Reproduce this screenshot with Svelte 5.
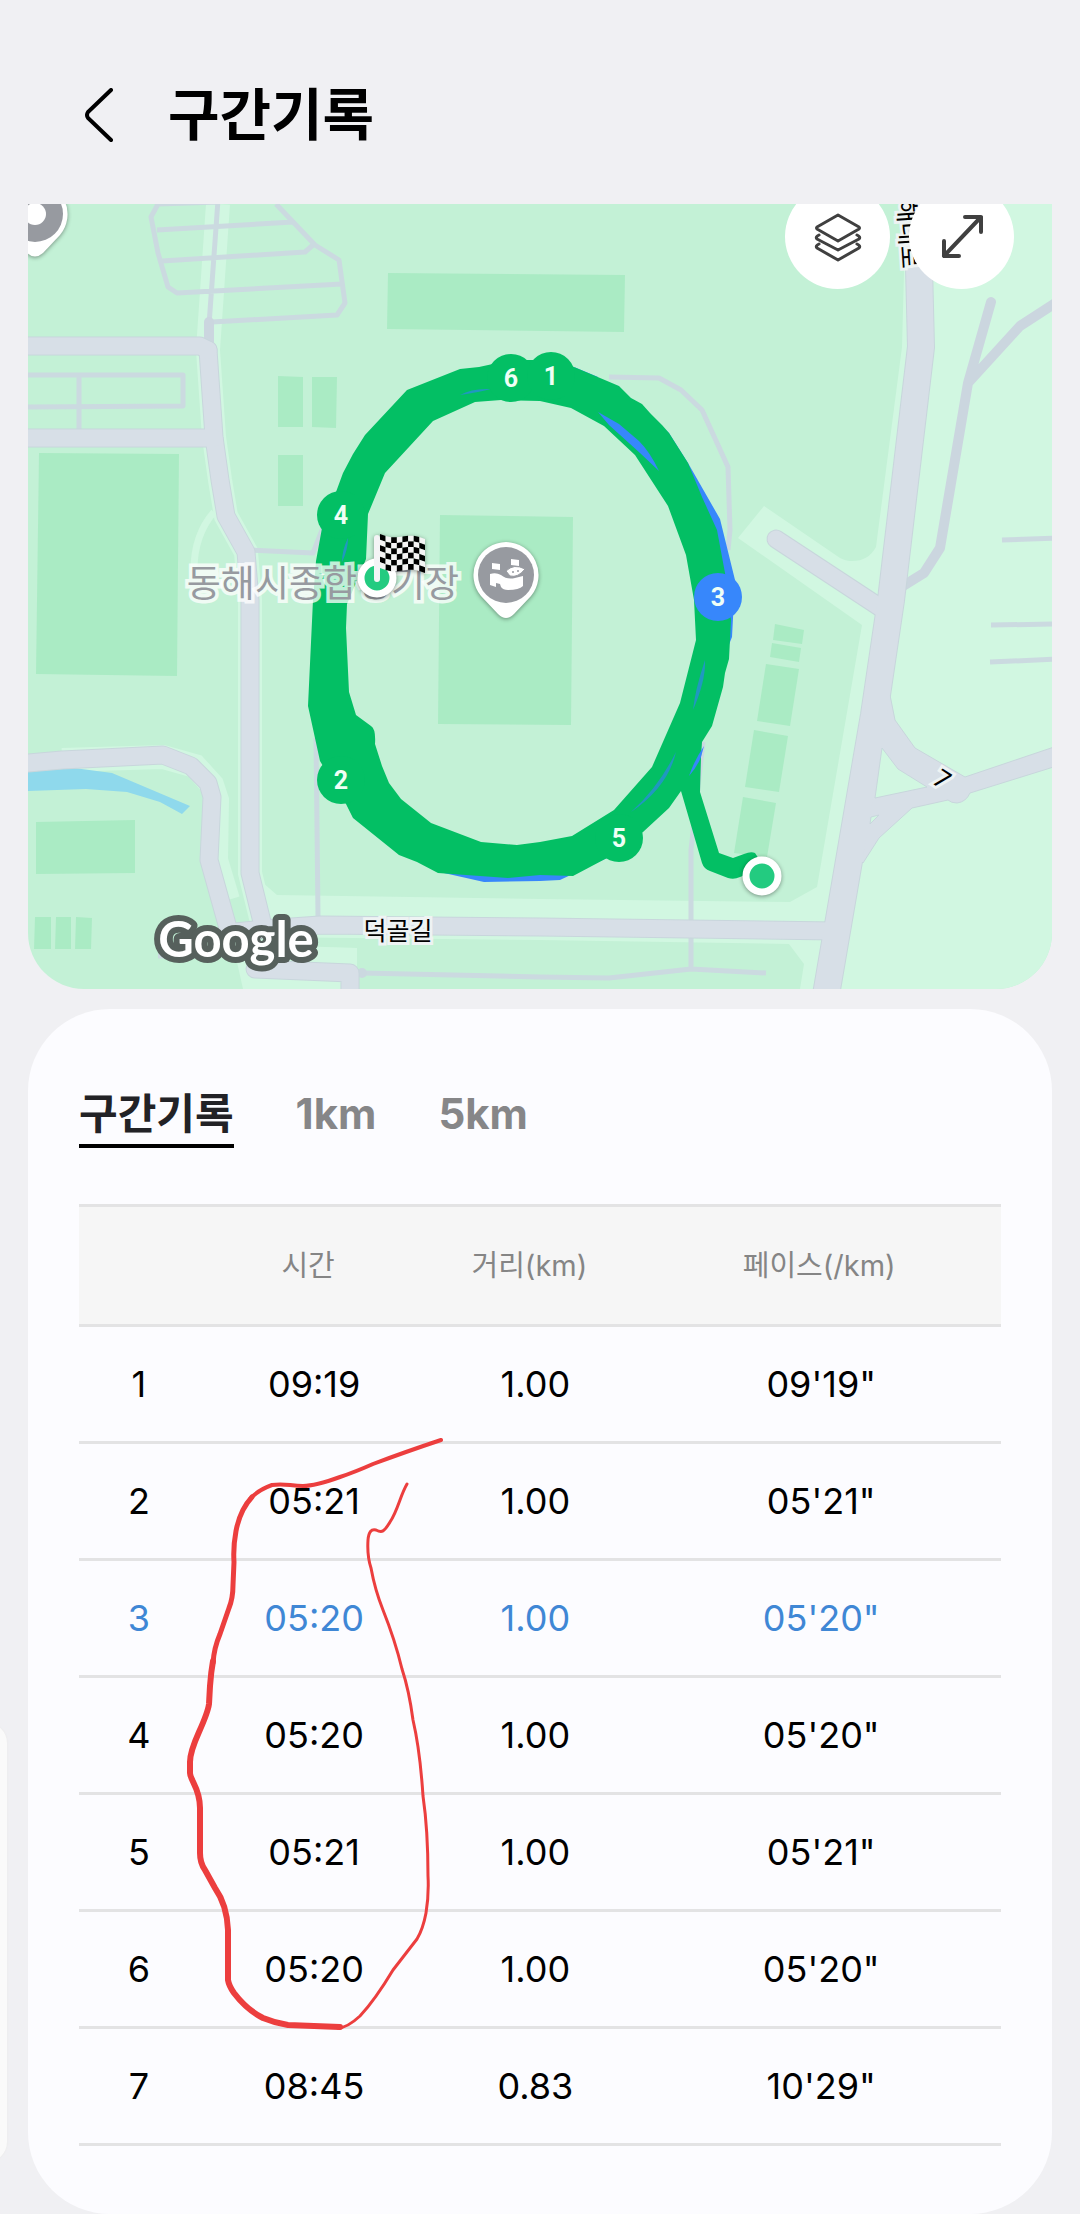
<script>
  const tabs = ['구간기록', '1km', '5km'];
  let activeTab = $state(0);

  const laps = [
    { n: 1, time: '09:19', distance: '1.00', pace: `09'19"` },
    { n: 2, time: '05:21', distance: '1.00', pace: `05'21"` },
    { n: 3, time: '05:20', distance: '1.00', pace: `05'20"`, best: true },
    { n: 4, time: '05:20', distance: '1.00', pace: `05'20"` },
    { n: 5, time: '05:21', distance: '1.00', pace: `05'21"` },
    { n: 6, time: '05:20', distance: '1.00', pace: `05'20"` },
    { n: 7, time: '08:45', distance: '0.83', pace: `10'29"` }
  ];

  const lapMarkers = [
    { n: 6, x: 511, y: 378 },
    { n: 1, x: 551, y: 376 },
    { n: 4, x: 341, y: 515 },
    { n: 2, x: 341, y: 780 },
    { n: 5, x: 619, y: 838 },
    { n: 3, x: 718, y: 597, best: true }
  ];

  const mainRoads = [
    'M208 350L214 437L220 480L226 516L246 552L250 600V873L263 926',
    'M28 763L62 760L163 755L191 766L208 783L212 797L209 860L228 928',
    'M20 346H200L208 350',
    'M20 438H214',
    'M226 933L263 929L320 925L540 927L836 931',
    'M255 969L350 973V1000',
    'M776 539L884 610'
  ];
  const bigRoad = 'M917 195L919 267L921 347L891 600L874 715L826 995';
  const lanes = [
    'M218 200L209 325M158 204L151 217L158 253L168 287L177 293L342 284M157 230L293 222M162 261L305 252L313 245M276 204L315 245L339 260L345 303L337 315L212 322M158 204L218 202',
    'M28 375H183V406L28 407M79 375V434',
    'M250 550L313 553L324 525M316 738L318 916',
    'M609 377L659 378L681 390L702 410L728 467L730 530L728 550',
    'M703 742L691 850V969M362 973L540 977L609 978L691 969L766 973',
    'M1002 540L1060 538M991 625L1060 624M990 662L1060 659M158 956H200'
  ];
  const fields = [
    '388,273 625,275 624,332 387,329',
    '278,376 303,377 303,427 278,427',
    '312,377 337,377 336,428 312,427',
    '278,455 303,455 303,506 278,506',
    '39,453 179,454 177,676 36,674',
    '36,822 135,820 135,873 36,874',
    '35,917 51,917 51,949 34,949',
    '56,917 71,917 71,949 55,949',
    '76,917 92,918 91,949 75,949',
    '440,515 573,517 571,725 438,724',
    '775,624 804,630 802,644 773,640',
    '772,643 801,648 799,662 770,657',
    '766,664 799,669 790,726 757,721',
    '754,730 788,736 779,792 745,787',
    '743,797 776,803 767,857 734,853'
  ];

  // Chequered flag: a grid whose upper and lower edges wave together.
  const cols = 8;
  const rows = 6;
  const wave = (u) => 5 * u + 2 * Math.sin(u * Math.PI * 2);
  const corner = (c, r) => `${380 + (c * 45) / cols},${534 + (r * 34) / rows + wave(c / cols)}`;
  const squares = [];
  for (let c = 0; c < cols; c++) {
    for (let r = 0; r < rows; r++) {
      squares.push({
        dark: (c + r) % 2 === 0,
        points: [corner(c, r), corner(c + 1, r), corner(c + 1, r + 1), corner(c, r + 1)].join(' ')
      });
    }
  }
</script>

<div class="screen">
  <header>
    <button class="back" aria-label="뒤로">
      <svg viewBox="0 0 30 54" aria-hidden="true"><path d="M27 2L4 24Q2 27 4 30L27 52" /></svg>
    </button>
    <h1>구간기록</h1>
  </header>

  <section class="map" aria-label="지도">
    <svg class="tiles" viewBox="28 204 1024 785">
      <rect x="28" y="204" width="1024" height="785" fill="#c3f1d6" />
      <path
        d="M903 204L904 273L902 347L876 547Q868 562 850 561Q846 561 840 558L764 506L738 538L862 625L817 887L790 902L540 899L277 895L255 876V989H1060V204Z"
        fill="#d1f7e1"
      />
      <path d="M262 937L540 940L789 944L804 964L800 989H357V948L262 947Z" fill="#c3f1d6" />
      <path d="M233 944L357 948V989H243Z" fill="#d1f7e1" />
      <g fill="none" stroke="#d1f7e1">
        <path stroke-width="24" d="M218 204L208 350L214 437L220 480L226 516L246 552L250 600V873L263 926" />
        <path stroke-width="24" d="M62 760L163 757L195 766L212 785L217 800L216 860L228 900" />
        <path stroke-width="7" d="M214 512Q194 535 194 570" />
      </g>
      {#each fields as points}
        <polygon {points} fill="#aaebc4" />
      {/each}
      <path d="M28 772L74 768L112 773L190 806L182 814L160 802L127 792L86 789L28 791Z" fill="#8fd9ec" />
      <g class="lane">
        {#each lanes as d}<path {d} />{/each}
      </g>
      <path class="track" d="M991 302L968 383L940 548L924 573L903 586M1060 300L1020 326L968 383" />
      <path class="track" d="M209 322V345" />
      <circle cx="362" cy="973" r="5" fill="#cbd8e0" />
      <g class="road-edge">
        {#each mainRoads as d}<path {d} />{/each}
      </g>
      <path d={bigRoad} fill="none" stroke="#c8d6dc" stroke-width="28" />
      <path
        d="M889 690L895 720L915 748L965 777L1060 745V765L970 793Q966 802 957 803Q951 803 948 800L912 808L879 838L863 863L850 850L870 690Z"
        fill="#d7dfe7"
        stroke="#c8d6dc"
      />
      <g class="road">
        {#each mainRoads as d}<path {d} />{/each}
      </g>
      <path d={bigRoad} fill="none" stroke="#d7dfe7" stroke-width="26" />
      <path d="M882 748L898 769L927 787L875 798ZM871 817L879 815L870 824Z" fill="#d1f7e1" stroke="#c8d6dc" />

      <g class="label">
        <text class="name" x="398" y="940" text-anchor="middle">덕골길</text>
        <text class="name" transform="translate(902 269) rotate(86)" text-anchor="end">동해대로</text>
        <text class="name" transform="translate(940 779) rotate(33)" text-anchor="middle" dy="8" dx="2">7</text>
      </g>

      <g fill="#3787fb">
        <path d="M655 420L669 433L688 463L720 519L735 580L732 637L722 662L710 640L705 560L675 480Z" />
        <path d="M444 873L484 882L540 881L560 880L607 858L600 840L460 850Z" />
        <path d="M574 367L598 377L590 384Z" />
      </g>
      <path
        fill="#03bf64"
        fill-rule="evenodd"
        d="M511 360L479 367L460 369L407 390L365 435L353 454L343 473L336 492L322 528L316 561L313 600L308 706L320 761L346 804L353 818L399 855L417 862L438 873L508 878L540 875L573 876L607 858L643 832L669 808L681 791L702 863Q704 869 710 871L728 878Q734 880 740 877L765 868L755 853Q751 851 744 854L733 858L719 853L700 792L701 757L702 742L712 726L723 687L725 673L729 659L731 620L725 573L717 530L702 497L688 463L669 433L662 425L650 413L642 404L631 398L619 386L574 367L551 360Z
        M501 400L540 401L571 408L604 426L635 455L668 506L686 555L694 600L696 640L680 703L652 767L614 810L572 836L540 842L517 845L481 842L431 823L401 799L389 783L382 766L375 744Q376 729 371 726L356 715L349 692L346 628L347 604L366 559L368 514L385 473L433 421L475 402Z"
      />
      <g fill="#3787fb">
        <path d="M598 412L619 424L639 441Q650 452 659 471L640 453L609 425Z" />
        <path d="M704 746L701 757Q697 767 689 776Q694 761 704 746Z" />
      </g>
      <g fill="#2098c0">
        <path d="M460 395Q472 388 491 389Q480 392 460 395ZM705 660Q706 680 693 710Q695 690 705 660ZM676 752Q668 787 631 812Q658 788 676 752ZM348 538Q348 550 342 562Q342 550 348 538Z" />
      </g>

      {#each lapMarkers as m}
        <circle cx={m.x} cy={m.y} r="24" fill={m.best ? '#3787fb' : '#03bf64'} />
        <text class="lap" x={m.x} y={m.y + 9}>{m.n}</text>
      {/each}

      <text class="place" x="323" y="597">동해시종합경기장</text>

      <g class="pin">
        <path d="M506 542A33 33 0 0 1 531 596L514 614Q506 622 498 614L481 596A33 33 0 0 1 506 542Z" fill="#fff" />
        <circle cx="506" cy="575" r="28" fill="#979aa0" />
        <path
          d="M492 563L500 564V570L492 569ZM511 559L519 560V566L511 565ZM490 574Q496 572 501 575Q507 580 515 578L523 576V586Q519 590 508 590Q503 590 501 587L500 584L496 583V587L490 585Z"
          fill="#fff"
        />
        <path d="M506 571Q514 563 525 569Q518 578 510 576Z" fill="#fff" stroke="#979aa0" />
        <circle cx="513" cy="572" r="1" fill="#979aa0" />
        <circle cx="518" cy="571" r="1" fill="#979aa0" />
      </g>
      <g class="pin">
        <path d="M35 181A33 33 0 0 1 60 235L43 253Q35 260 27 253L10 235A33 33 0 0 1 35 181Z" fill="#fff" />
        <circle cx="35" cy="214" r="28" fill="#979aa0" />
        <circle cx="35" cy="214" r="11" fill="#fff" />
      </g>

      <g class="pin">
        <circle cx="762" cy="876" r="16" fill="#23cb80" stroke="#fff" stroke-width="7" />
        <circle cx="377" cy="578" r="16" fill="#23cb80" stroke="#fff" stroke-width="7" />
        {#each squares as s}
          <polygon points={s.points} fill={s.dark ? '#000' : '#f4f4f4'} />
        {/each}
        <rect x="374" y="535" width="6" height="47" rx="3" fill="#f4f4f6" />
      </g>

      <text class="brand" x="236" y="957">Google</text>
    </svg>

    <div class="controls">
      <button aria-label="지도 레이어">
        <svg viewBox="0 0 48 50" aria-hidden="true">
          <path d="M24 3L45 15Q46 16 45 17L24 29L3 17Q2 16 3 15ZM5 23Q1 25 3 27L24 38L45 27Q47 25 43 23M5 32Q1 34 3 36L24 48L45 36Q47 34 43 32" />
        </svg>
      </button>
      <button aria-label="지도 확대">
        <svg class="bold" viewBox="0 0 48 50" aria-hidden="true">
          <path d="M6 44L43 5M27 5H43V20M6 29V44H21" />
        </svg>
      </button>
    </div>
  </section>

  <main>
    <nav>
      {#each tabs as tab, i}
        <button class:active={activeTab === i} onclick={() => (activeTab = i)}>{tab}</button>
      {/each}
    </nav>

    <div class="records">
      <table>
        <colgroup>
          <col class="c1" /><col class="c2" /><col class="c3" /><col class="c4" />
        </colgroup>
        <thead>
          <tr><th></th><th>시간</th><th>거리(km)</th><th>페이스(/km)</th></tr>
        </thead>
        <tbody>
          {#each laps as lap}
            <tr class:best={lap.best}>
              <td>{lap.n}</td><td>{lap.time}</td><td>{lap.distance}</td><td>{lap.pace}</td>
            </tr>
          {/each}
        </tbody>
      </table>
      <!-- Hand-drawn pen loop around laps 2 to 6 -->
      <svg class="pen" viewBox="79 1204 922 942" aria-hidden="true">
        <path
          stroke-width="4"
          d="M441 1440Q405 1452 373 1464Q355 1472 340 1477Q315 1486 303 1486C290 1486 285 1483 272 1485Q258 1490 250 1499"
        />
        <path stroke-width="5" d="M252 1497Q240 1510 236 1531Q233 1547 234 1562L233 1585Q233 1598 229 1608L220 1634Q214 1648 213 1663" />
        <path
          stroke-width="6"
          d="M213 1661Q211 1672 210 1686L209 1704Q208 1712 199 1732Q190 1752 190 1762V1773C190 1780 200 1788 200 1808V1853Q200 1863 205 1870L215 1888Q227 1905 228 1930V1980Q229 1986 234 1993Q247 2010 263 2018Q275 2023 288 2025L340 2027"
        />
        <path
          stroke-width="3"
          d="M338 2028Q347 2028 360 2016Q375 2000 393 1970L417 1939Q423 1929 426 1913Q429 1895 428 1876Q428 1830 423 1796Q420 1750 413 1720Q409 1690 402 1669Q395 1640 383 1610Q375 1590 371 1568Q367 1556 368 1540Q369 1528 376 1530C382 1533 384 1532 390 1522C398 1510 400 1496 407 1484"
        />
      </svg>
    </div>
  </main>

  <div class="edge-panel"></div>
</div>

<style>
  :global(body) {
    margin: 0;
    background: #f0f0f3;
  }

  .screen {
    position: relative;
    overflow: hidden;
    color: #000;
    font-family: Inter, 'Noto Sans CJK KR', sans-serif;
  }

  button {
    margin: 0;
    padding: 0;
    border: 0;
    background: none;
    color: inherit;
    font: inherit;
    cursor: pointer;
  }

  header {
    display: flex;
    align-items: center;
    gap: 54px;
    padding: 73px 84px 47px;
    line-height: 84px;
  }

  h1 {
    margin: 0;
    font-size: 56px;
    font-weight: 700;
  }

  .back {
    display: flex;
  }

  .back svg {
    width: 30px;
    fill: none;
    stroke: #000;
    stroke-width: 4;
    stroke-linecap: round;
  }

  .map {
    position: relative;
    margin: 0 28px 20px;
    overflow: hidden;
    border-radius: 0 0 56px 56px;
  }

  .tiles {
    display: block;
    width: 100%;
  }

  .lane,
  .road,
  .road-edge,
  .track {
    fill: none;
    stroke-linejoin: round;
  }

  .lane {
    stroke: #cbdae0;
    stroke-width: 5;
  }

  .track {
    stroke: #cbd6df;
    stroke-width: 10;
    stroke-linecap: round;
  }

  .road {
    stroke: #d7dfe7;
    stroke-width: 17;
    stroke-linecap: round;
  }

  .road-edge {
    stroke: #c8d6dc;
    stroke-width: 19;
    stroke-linecap: round;
  }

  .name {
    fill: #000;
    stroke: #eef3f3;
    stroke-width: 6;
    paint-order: stroke;
    font-size: 25px;
    font-weight: 400;
  }

  .place {
    fill: #979aa0;
    stroke: rgba(255, 255, 255, 0.75);
    stroke-width: 7;
    paint-order: stroke;
    font-size: 37px;
    text-anchor: middle;
  }

  .lap {
    fill: #effff6;
    font: 700 25px Roboto, sans-serif;
    text-anchor: middle;
  }

  .pin {
    filter: drop-shadow(0 1px 2px rgba(0, 0, 0, 0.4));
  }

  .brand {
    fill: #fff;
    stroke: #56605c;
    stroke-width: 12;
    stroke-linejoin: round;
    paint-order: stroke;
    font: 700 49px Lato, sans-serif;
    text-anchor: middle;
  }

  .controls {
    position: absolute;
    top: -20px;
    right: 38px;
    display: flex;
    gap: 19px;
  }

  .controls button {
    display: grid;
    place-items: center;
    width: 105px;
    height: 105px;
    border-radius: 50%;
    background: #fff;
  }

  .controls svg {
    width: 48px;
    fill: none;
    stroke: #404040;
    stroke-width: 3;
    stroke-linecap: round;
    stroke-linejoin: round;
  }

  .controls .bold {
    stroke-width: 4;
  }

  main {
    margin: 0 28px;
    padding: 75px 51px 68px;
    border-radius: 82px;
    background: #fcfcff;
  }

  nav {
    display: flex;
    gap: 62px;
    margin-bottom: 56px;
  }

  nav button {
    border-bottom: 4px solid transparent;
    color: #868688;
    font-size: 42px;
    font-weight: 700;
    line-height: 60px;
  }

  nav .active {
    border-color: #000;
    color: #222226;
  }

  .records {
    position: relative;
  }

  table {
    width: 100%;
    border-collapse: separate;
    border-spacing: 0;
    table-layout: fixed;
  }

  .c1 {
    width: 13%;
  }

  .c2 {
    width: 25%;
  }

  .c3 {
    width: 23%;
  }

  .c4 {
    width: 39%;
  }

  th,
  td {
    padding: 0;
    border-bottom: 3px solid #e3e3e4;
    text-align: center;
    font-weight: 400;
  }

  th {
    padding-right: 12px;
    border-top: 3px solid #e3e3e4;
    background: #f6f6f6;
    color: #858585;
    font-size: 29px;
    line-height: 117px;
  }

  th:last-child {
    padding-right: 4px;
  }

  td {
    font-size: 36px;
    line-height: 114px;
  }

  .best td {
    color: #3f87d5;
  }

  .pen {
    position: absolute;
    inset: 0;
    width: 100%;
    height: 100%;
    fill: none;
    stroke: #ec3e3e;
    stroke-linecap: round;
    stroke-linejoin: round;
    pointer-events: none;
  }

  .edge-panel {
    position: absolute;
    bottom: 52px;
    left: -40px;
    width: 47px;
    height: 439px;
    border-radius: 20px;
    background: #fafafa;
    box-shadow: 0 0 2px #e8e8e6;
  }
</style>
